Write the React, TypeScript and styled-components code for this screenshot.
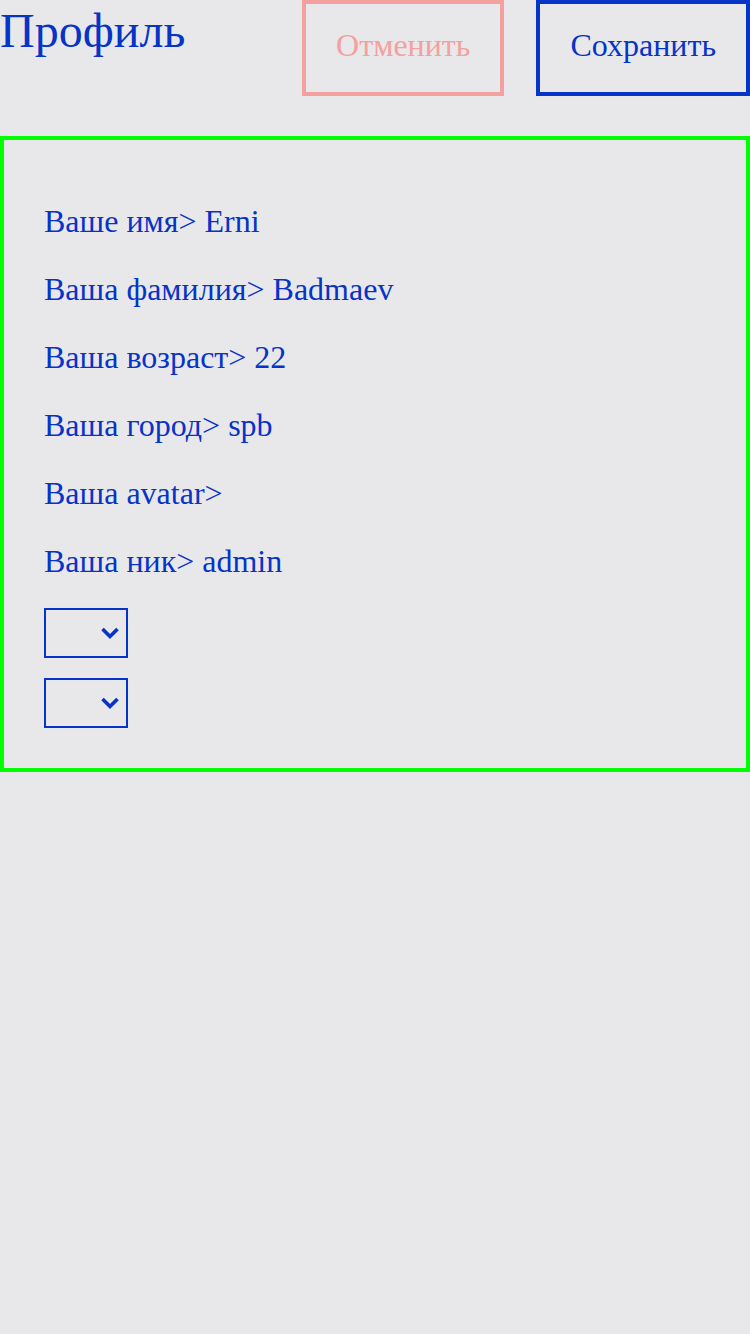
import styled, { createGlobalStyle } from "styled-components";

const GlobalStyle = createGlobalStyle`
  html, body {
    margin: 0;
    padding: 0;
    background: #e8e8ea;
  }
  body {
    font-family: "Liberation Serif", "Times New Roman", serif;
    color: #0633c8;
  }
`;

const BLUE = "#0633c8";
const PINK = "#f4a0a0";

const Page = styled.div({
  display: "flex",
  flexDirection: "column",
  gap: "40px",
  width: "750px",
});

const Header = styled.header({
  display: "flex",
  justifyContent: "space-between",
  alignItems: "flex-start",
});

const Title = styled.h1({
  margin: 0,
  paddingTop: "3px",
  fontSize: "48px",
  fontWeight: 400,
  lineHeight: "normal",
  color: BLUE,
});

const Actions = styled.div({
  display: "flex",
  gap: "32px",
});

const ActionButton = styled.button<{ $variant: "cancel" | "save" }>(({ $variant }) => ({
  height: "96px",
  padding: "0 30px 6px",
  margin: 0,
  background: "transparent",
  border: `4px solid ${$variant === "cancel" ? PINK : BLUE}`,
  color: $variant === "cancel" ? PINK : BLUE,
  fontFamily: "\"Liberation Serif\", \"Times New Roman\", serif",
  fontSize: "32px",
  cursor: "pointer",
}));

const Form = styled.section({
  display: "flex",
  flexDirection: "column",
  border: "4px solid #00ff00",
  padding: "63px 40px 40px",
  height: "636px",
  boxSizing: "border-box",
});

const Fields = styled.div({
  display: "flex",
  flexDirection: "column",
  gap: "32px",
});

const Field = styled.p({
  margin: 0,
  fontSize: "32px",
  lineHeight: "36px",
  color: BLUE,
});

const Selects = styled.div({
  display: "flex",
  flexDirection: "column",
  gap: "20px",
  marginTop: "29px",
});

const SelectWrap = styled.div({
  position: "relative",
  width: "84px",
  height: "50px",
});

const Select = styled.select({
  appearance: "none",
  width: "100%",
  height: "100%",
  margin: 0,
  border: `2px solid ${BLUE}`,
  borderRadius: 0,
  background: "transparent",
  color: BLUE,
  fontFamily: "\"Liberation Serif\", serif",
  fontSize: "20px",
});

const Chevron = styled.svg({
  position: "absolute",
  right: "8px",
  top: "50%",
  transform: "translateY(-50%)",
  pointerEvents: "none",
});

const fields = [
  ["Ваше имя", "Erni"],
  ["Ваша фамилия", "Badmaev"],
  ["Ваша возраст", "22"],
  ["Ваша город", "spb"],
  ["Ваша avatar", ""],
  ["Ваша ник", "admin"],
];

const Dropdown = () => (
  <SelectWrap>
    <Select defaultValue="">
      <option value=""></option>
    </Select>
    <Chevron width="20" height="14" viewBox="0 0 20 14">
      <polyline points="2.5,3 10,10.5 17.5,3" fill="none" stroke={BLUE} strokeWidth="3.6" />
    </Chevron>
  </SelectWrap>
);

export default function App() {
  return <Page>
    <GlobalStyle />
    <Header>
      <Title>Профиль</Title>
      <Actions>
        <ActionButton $variant="cancel">Отменить</ActionButton>
        <ActionButton $variant="save">Сохранить</ActionButton>
      </Actions>
    </Header>
    <Form>
      <Fields>
        {fields.map(([label, value]) => (
          <Field key={label}>{label}&gt; {value}</Field>
        ))}
      </Fields>
      <Selects>
        <Dropdown />
        <Dropdown />
      </Selects>
    </Form>
  </Page>;
}
